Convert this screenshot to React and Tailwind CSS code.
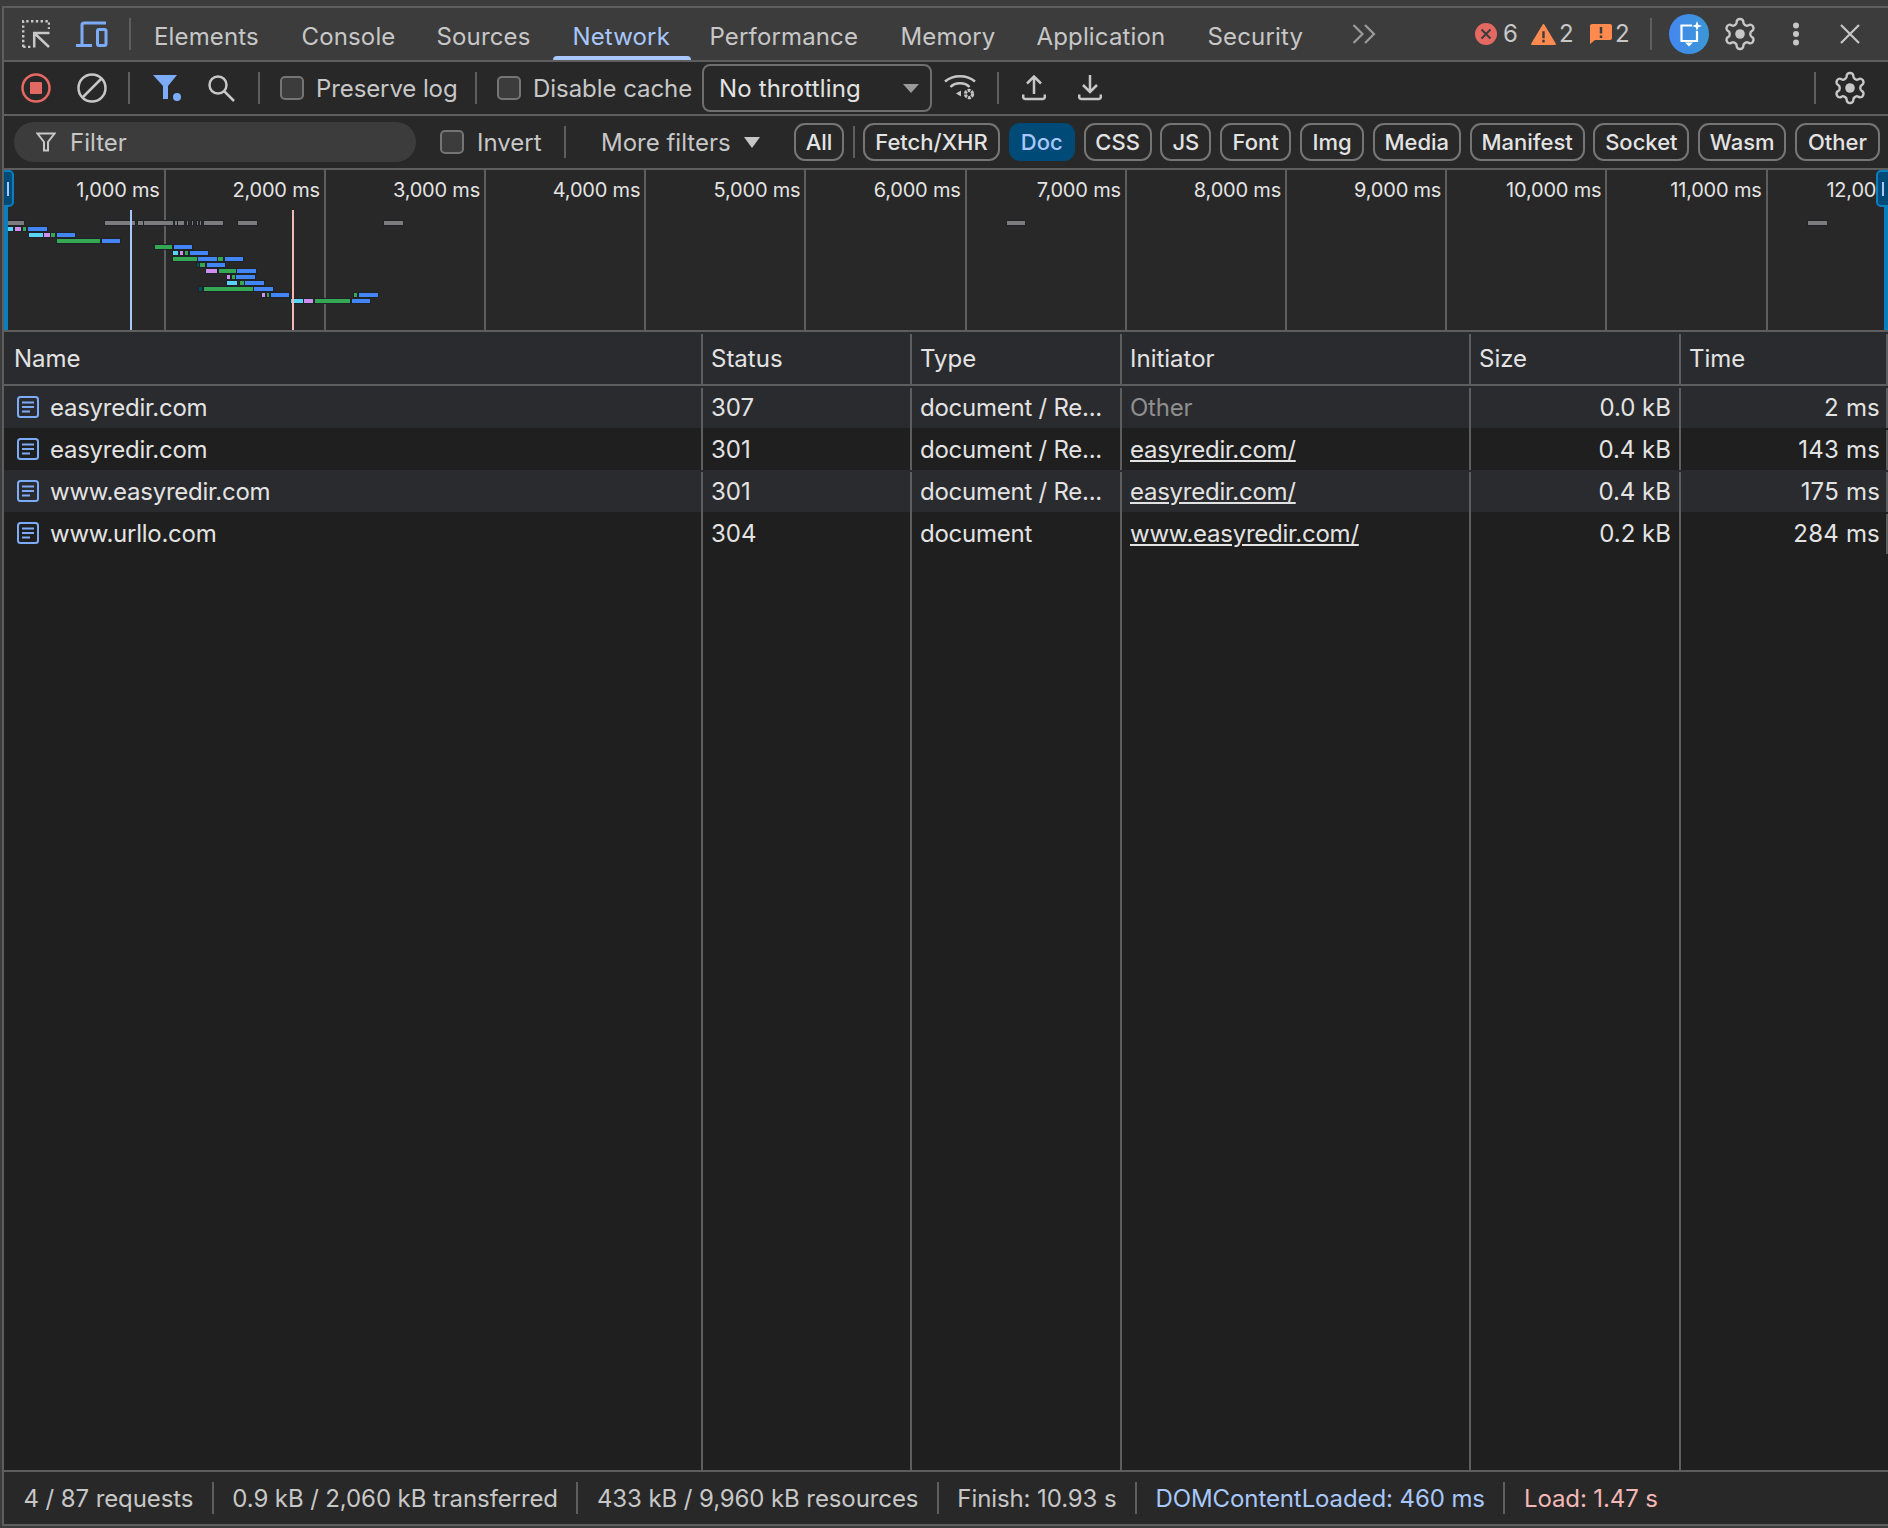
import { useState } from 'react';

const tabs = [
    { name: 'Elements', width: 'w-[147.500px]' },
    { name: 'Console', width: 'w-[135px]' },
    { name: 'Sources', width: 'w-[136px]' },
    { name: 'Network', width: 'w-[137px]', active: true },
    { name: 'Performance', width: 'w-[191px]' },
    { name: 'Memory', width: 'w-[136px]' },
    { name: 'Application', width: 'w-[171px]' },
    { name: 'Security', width: 'w-[144.500px]' },
];

const chips = [
    { name: 'Fetch/XHR', width: 'w-[137px]' },
    { name: 'Doc', width: 'w-[66px]', active: true },
    { name: 'CSS', width: 'w-[68px]' },
    { name: 'JS', width: 'w-[51px]' },
    { name: 'Font', width: 'w-[71px]' },
    { name: 'Img', width: 'w-[64px]' },
    { name: 'Media', width: 'w-[88px]' },
    { name: 'Manifest', width: 'w-[115px]' },
    { name: 'Socket', width: 'w-[96px]' },
    { name: 'Wasm', width: 'w-[88px]' },
    { name: 'Other', width: 'w-[85px]' },
];

const requests = [
    { name: 'easyredir.com', status: '307', type: 'document / Re...', initiator: 'Other', size: '0.0 kB', time: '2 ms' },
    { name: 'easyredir.com', status: '301', type: 'document / Re...', initiator: 'easyredir.com/', link: true, size: '0.4 kB', time: '143 ms' },
    { name: 'www.easyredir.com', status: '301', type: 'document / Re...', initiator: 'easyredir.com/', link: true, size: '0.4 kB', time: '175 ms' },
    { name: 'www.urllo.com', status: '304', type: 'document', initiator: 'www.easyredir.com/', link: true, size: '0.2 kB', time: '284 ms' },
];

const G = '#34a853';
const B = '#4285f4';
const C = '#5bd3f7';
const P = '#d08ff0';
const D = '#04505f';
const K = '#7c7c7c';

// overview rows: [y, [x0, x1, colour]...] read off the reference, in px
const overview = [
    [221, [[7, 24, K], [105, 135, K], [138, 143, K], [144, 173, K], [175, 177, K], [178, 184, K], [187, 188, K], [192, 193, K], [197, 198, K], [200, 201, K], [204, 223, K], [238, 257, K], [384, 403, K], [1007, 1025, K], [1808, 1827, K]]],
    [227, [[7, 13, C], [15, 21, P], [23, 26, G], [28, 47, B]]],
    [233, [[29, 43, C], [44, 50, P], [51, 55, G], [57, 75, B]]],
    [239, [[57, 100, G], [102, 120, B]]],
    [245, [[155, 172, G], [174, 192, B]]],
    [251, [[173, 178, C], [180, 183, P], [185, 188, G], [190, 208, B]]],
    [257, [[173, 197, G], [198, 217, B], [218, 223, G], [225, 243, B]]],
    [263, [[197, 199, D], [200, 205, G], [207, 225, B]]],
    [269, [[206, 217, P], [219, 236, G], [237, 256, B]]],
    [275, [[227, 230, P], [232, 235, G], [236, 255, B]]],
    [281, [[227, 237, C], [240, 244, G], [245, 264, B]]],
    [287, [[199, 202, D], [204, 253, G], [254, 273, B]]],
    [293, [[262, 265, P], [267, 269, G], [271, 289, B], [354, 357, G], [359, 378, B]]],
    [299, [[291, 303, C], [304, 313, P], [315, 350, G], [352, 370, B]]],
];

const labels = ['1,000 ms', '2,000 ms', '3,000 ms', '4,000 ms', '5,000 ms', '6,000 ms', '7,000 ms', '8,000 ms', '9,000 ms', '10,000 ms', '11,000 ms', '12,000 ms'];

function Gear({ className }) {
    return (
        <svg className={className} viewBox="0 0 24 24" fill="none" stroke="#c7c7c7" strokeWidth="1.6">
            <path d="M12.22 2h-.44a2 2 0 0 0-2 2v.18a2 2 0 0 1-1 1.73l-.43.25a2 2 0 0 1-2 0l-.15-.08a2 2 0 0 0-2.73.73l-.22.38a2 2 0 0 0 .73 2.73l.15.1a2 2 0 0 1 1 1.72v.51a2 2 0 0 1-1 1.74l-.15.09a2 2 0 0 0-.73 2.73l.22.38a2 2 0 0 0 2.73.73l.15-.08a2 2 0 0 1 2 0l.43.25a2 2 0 0 1 1 1.73V20a2 2 0 0 0 2 2h.44a2 2 0 0 0 2-2v-.18a2 2 0 0 1 1-1.73l.43-.25a2 2 0 0 1 2 0l.15.08a2 2 0 0 0 2.73-.73l.22-.39a2 2 0 0 0-.73-2.73l-.15-.08a2 2 0 0 1-1-1.74v-.5a2 2 0 0 1 1-1.74l.15-.09a2 2 0 0 0 .73-2.73l-.22-.38a2 2 0 0 0-2.73-.73l-.15.08a2 2 0 0 1-2 0l-.43-.25a2 2 0 0 1-1-1.73V4a2 2 0 0 0-2-2z" />
            <circle cx="12" cy="12" r="3.2" fill="#c7c7c7" stroke="none" />
        </svg>
    );
}

function DocIcon() {
    return (
        <svg className="w-[22px] h-[22px] shrink-0 mt-[-2px]" viewBox="0 0 22 22" fill="none">
            <rect x="1" y="1" width="20" height="20" rx="2.5" stroke="#7cacf8" strokeWidth="2" />
            <path d="M5 6.5h12M5 11h12M5 15.5h8" stroke="#7cacf8" strokeWidth="2" />
        </svg>
    );
}

function Checkbox({ className = '' }) {
    return <span className={`w-[24px] h-[24px] rounded-[5px] border-2 border-[#757575] bg-[#3c3c3c] shrink-0 ${className}`} />;
}

function Divider({ className = '' }) {
    return <span className={`w-[2px] h-[32px] bg-[#5e5e5e] shrink-0 ${className}`} />;
}

function TabBar() {
    return (
        <div className="h-[52px] flex items-center bg-[#3c3c3c] shrink-0">
            <svg className="w-[28px] h-[28px] ml-[18px] shrink-0" viewBox="0 0 28 28" fill="none" stroke="#c7c7c7">
                <path d="M1.200 27V1.200H27V9" strokeWidth="2.400" strokeDasharray="2.400 2.400" />
                <path d="M1.200 27H9" strokeWidth="2.400" strokeDasharray="2.400 2.400" />
                <path d="M27.500 13H12.200V27.500M12.200 13L27 27" strokeWidth="2.500" />
            </svg>
            <svg className="w-[32px] h-[26px] ml-[26px] shrink-0" viewBox="0 0 32 26" fill="none" stroke="#7cacf8" strokeWidth="3">
                <path d="M30 2H8a2 2 0 0 0-2 2V23" />
                <path d="M0 24.500H16" />
                <rect x="21.500" y="8.500" width="8.500" height="16" rx="1.500" />
            </svg>
            <Divider className="ml-[21px] mr-[23px]" />
            {tabs.map((tab) => (
                <div key={tab.name} className={`relative h-full flex items-center pt-[6px] text-[24px] tracking-[0.15px] ${tab.width} ${tab.active ? 'text-[#a8c7fa]' : 'text-[#c7c7c7]'}`}>
                    {tab.name}
                    {tab.active && <span className="absolute left-[-20px] w-[138px] bottom-0 h-[4px] rounded-t-[4px] bg-[#a8c7fa]" />}
                </div>
            ))}
            <svg className="w-[24px] h-[20px] shrink-0" viewBox="0 0 24 20" fill="none" stroke="#9a9a9a" strokeWidth="2.200">
                <path d="M1.500 1l9 9-9 9M13 1l9 9-9 9" />
            </svg>
            <svg className="w-[22px] h-[22px] ml-[99px] shrink-0" viewBox="0 0 22 22">
                <circle cx="11" cy="11" r="11" fill="#e46962" />
                <path d="M6.500 6.500l9 9M15.500 6.500l-9 9" stroke="#3c3c3c" strokeWidth="2" />
            </svg>
            <span className="ml-[6px] w-[22px] text-[24px] text-[#c7c7c7]">6</span>
            <svg className="w-[25px] h-[21px] ml-[6px] shrink-0" viewBox="0 0 26 22">
                <path d="M13 1L25 21H1z" fill="#ff8a50" stroke="#ff8a50" strokeWidth="2" strokeLinejoin="round" />
                <path d="M13 7.500v7.500M13 16.500v3" stroke="#3c3c3c" strokeWidth="2.500" />
            </svg>
            <span className="ml-[3px] w-[24px] text-[24px] text-[#c7c7c7]">2</span>
            <svg className="w-[22px] h-[20px] ml-[7px] shrink-0" viewBox="0 0 22 20">
                <path d="M2 0H20a2 2 0 0 1 2 2V14a2 2 0 0 1-2 2H5L0 20V2a2 2 0 0 1 2-2z" fill="#ff8a50" />
                <path d="M11 3v6.500M11 11.500v2.500" stroke="#3c3c3c" strokeWidth="2.500" />
            </svg>
            <span className="ml-[3px] w-[22px] text-[24px] text-[#c7c7c7]">2</span>
            <Divider className="ml-[13px]" />
            <div className="w-[40px] h-[40px] ml-[17px] rounded-full bg-linear-to-r from-[#4487f0] to-[#3b97d5] shrink-0">
                <svg className="w-[40px] h-[40px]" viewBox="0 0 40 40" fill="none">
                    <path d="M23 11.500H12.500V27H28V17" stroke="#fff" strokeWidth="2.200" />
                    <path d="M16 28.500h8l-4 4z" fill="#fff" />
                    <path d="M28 7l1.300 3.700 3.700 1.300-3.700 1.300-1.300 3.700-1.300-3.700-3.700-1.300 3.700-1.300z" fill="#fff" />
                </svg>
            </div>
            <Gear className="w-[36px] h-[36px] ml-[13px] shrink-0" />
            <svg className="w-[8px] h-[24px] ml-[34px] shrink-0" viewBox="0 0 8 24" fill="#c7c7c7">
                <circle cx="4" cy="3.500" r="3" />
                <circle cx="4" cy="12" r="3" />
                <circle cx="4" cy="20.500" r="3" />
            </svg>
            <svg className="w-[20px] h-[20px] ml-[40px] shrink-0" viewBox="0 0 20 20" stroke="#c7c7c7" strokeWidth="2.200">
                <path d="M1 1l18 18M19 1L1 19" />
            </svg>
        </div>
    );
}

function Toolbar() {
    return (
        <div className="h-[54px] flex items-center bg-[#282828] border-t-2 border-[#5e5e5e] shrink-0 text-[24px]">
            <svg className="w-[30px] h-[30px] ml-[17px] shrink-0" viewBox="0 0 30 30">
                <circle cx="15" cy="15" r="13.500" fill="none" stroke="#e46962" strokeWidth="2.500" />
                <rect x="9" y="9" width="12" height="12" rx="1" fill="#e46962" />
            </svg>
            <svg className="w-[30px] h-[30px] ml-[26px] shrink-0" viewBox="0 0 30 30" fill="none" stroke="#c7c7c7" strokeWidth="2.500">
                <circle cx="15" cy="15" r="13.500" />
                <path d="M24.500 5.500l-19 19" />
            </svg>
            <Divider className="ml-[21px]" />
            <svg className="w-[28px] h-[26px] ml-[23px] shrink-0" viewBox="0 0 28 26" fill="#7cacf8">
                <path d="M0 0H24L15 11V24H10V11z" />
                <circle cx="24" cy="22" r="4" />
            </svg>
            <svg className="w-[28px] h-[28px] ml-[26px] shrink-0" viewBox="0 0 28 28" fill="none" stroke="#c7c7c7" strokeWidth="2.500">
                <circle cx="11" cy="11" r="8.500" />
                <path d="M17 17l10 10" />
            </svg>
            <Divider className="ml-[23px]" />
            <Checkbox className="ml-[20px]" />
            <span className="ml-[12px] w-[146px] pt-[2px] text-[#c7c7c7] whitespace-nowrap tracking-[-0.1px]">Preserve log</span>
            <Divider className="ml-[13px]" />
            <Checkbox className="ml-[20px]" />
            <span className="ml-[12px] w-[156px] pt-[2px] text-[#c7c7c7] whitespace-nowrap tracking-[-0.05px]">Disable cache</span>
            <div className="w-[230px] h-[48px] ml-[13px] rounded-[8px] border-2 border-[#6e6e6e] flex items-center pl-[15px] text-[#e3e3e3] shrink-0">
                <span className="flex-1 pt-[2px] whitespace-nowrap tracking-[0.15px]">No throttling</span>
                <span className="mr-[11px] w-0 h-0 border-x-[8px] border-x-transparent border-t-[9px] border-t-[#9a9a9a]" />
            </div>
            <svg className="w-[32px] h-[28px] ml-[12px] shrink-0" viewBox="0 0 32 28" fill="none" stroke="#c7c7c7" strokeWidth="2.500">
                <path d="M1 7.500C9 .5 23 .5 31 7.500M6.500 13C11 8 21 8 25.500 13" />
                <path d="M12 19.500L17 16.500V22.500z" fill="#c7c7c7" stroke="none" />
                <circle cx="25" cy="20" r="3.600" strokeWidth="3.200" strokeDasharray="2.800 1" />
            </svg>
            <Divider className="ml-[21px]" />
            <svg className="w-[24px] h-[26px] ml-[23px] shrink-0" viewBox="0 0 24 26" fill="none" stroke="#c7c7c7" strokeWidth="2.500">
                <path d="M12 19V1.500M5 8.500L12 1.500l7 7M1.200 19.500v2.500a2 2 0 0 0 2 2h17.600a2 2 0 0 0 2-2v-2.500" />
            </svg>
            <svg className="w-[24px] h-[26px] ml-[32px] shrink-0" viewBox="0 0 24 26" fill="none" stroke="#c7c7c7" strokeWidth="2.500">
                <path d="M12 0V17M5 10L12 17l7-7M1.200 19.500v2.500a2 2 0 0 0 2 2h17.600a2 2 0 0 0 2-2v-2.500" />
            </svg>
            <Divider className="ml-[712px]" />
            <Gear className="w-[36px] h-[36px] ml-[16px] shrink-0" />
        </div>
    );
}

function FilterBar() {
    return (
        <div className="h-[54px] flex items-center bg-[#282828] border-t-2 border-[#5e5e5e] shrink-0 text-[24px]">
            <div className="w-[402px] h-[40px] ml-[10px] rounded-full bg-[#3c3c3c] flex items-center pl-[22px] text-[#c7c7c7] shrink-0">
                <svg className="w-[20px] h-[20px] shrink-0" viewBox="0 0 20 20" fill="none" stroke="#c7c7c7" strokeWidth="2">
                    <path d="M1.500 1.500h17L12 10v8.500H8V10z" />
                </svg>
                <span className="ml-[14px] pt-[2px]">Filter</span>
            </div>
            <Checkbox className="ml-[24px]" />
            <span className="ml-[13px] w-[63px] pt-[2px] text-[#c7c7c7]">Invert</span>
            <Divider className="ml-[24px]" />
            <span className="ml-[35px] w-[143px] pt-[2px] text-[#c7c7c7] whitespace-nowrap">More filters</span>
            <span className="w-0 h-0 border-x-[8px] border-x-transparent border-t-[11px] border-t-[#c7c7c7] shrink-0" />
            <div className="ml-[34px] flex items-center font-medium text-[22px] text-[#e3e3e3]">
                <span className="w-[50px] h-[38px] rounded-[11px] border-2 border-[#757575] flex items-center justify-center shrink-0">All</span>
                <Divider className="ml-[9px] mr-[8px]" />
                <div className="flex items-center gap-[8.800px]">
                    {chips.map((chip) => (
                        <span key={chip.name} className={`${chip.width} h-[38px] rounded-[11px] border-2 flex items-center justify-center shrink-0 whitespace-nowrap ${chip.active ? 'border-[#004a77] bg-[#004a77] text-[#a8c7fa]' : 'border-[#757575]'}`}>
                            {chip.name}
                        </span>
                    ))}
                </div>
            </div>
        </div>
    );
}

function Overview() {
    return (
        <div className="relative h-[164px] bg-[#282828] border-t-2 border-b-2 border-[#5e5e5e] overflow-hidden shrink-0">
            <div className="flex h-full ml-[1.500px]">
                {labels.map((label) => (
                    <div key={label} className="w-[160.200px] shrink-0 h-full border-r-2 border-[#5e5e5e] text-right pr-[4px] pt-[8px] text-[20px] leading-[24px] tracking-[-0.2px] text-[#e3e3e3] whitespace-nowrap">
                        {label}
                    </div>
                ))}
            </div>
            {overview.map(([y, bars]) => bars.map(([x0, x1, colour]) => (
                <span key={`${y}-${x0}`} className="absolute h-[6px] border border-[#1f2328]" style={{ left: x0 - 5, top: y - 171, width: x1 - x0 + 2, backgroundColor: colour }} />
            )))}
            <span className="absolute left-[126px] top-[40px] bottom-0 w-[2px] bg-[#a8c7fa]" />
            <span className="absolute left-[288px] top-[40px] bottom-0 w-[2px] bg-[#f2b8b5]" />
            <span className="absolute left-0 top-0 bottom-0 w-[4px] bg-[#0a7fbf]" />
            <span className="absolute left-[-2px] top-0 w-[12px] h-[37px] rounded-r-[5px] bg-[#004a77] border-2 border-[#0a7fbf] flex items-center justify-center">
                <span className="w-[2px] h-[14px] bg-[#a8c7fa]" />
            </span>
            <span className="absolute right-0 top-0 bottom-0 w-[4px] bg-[#0a7fbf]" />
            <span className="absolute right-[-2px] top-0 w-[14px] h-[37px] rounded-l-[5px] bg-[#004a77] border-2 border-[#0a7fbf] flex items-center justify-center">
                <span className="w-[2px] h-[14px] bg-[#a8c7fa]" />
            </span>
        </div>
    );
}

function RequestTable() {
    const [rows] = useState(requests);
    const cols = 'grid grid-cols-[699px_209px_210px_349px_210px_1fr]';
    const cell = 'border-r-2 border-[#5e5e5e] px-[8px] flex items-center whitespace-nowrap overflow-hidden';
    const squeezed = 'tracking-[-0.25px]';

    return (
        <div className="flex-1 flex flex-col bg-[#1f1f1f] min-h-0 text-[24px] text-[#e3e3e3]">
            <div className={`${cols} h-[54px] pt-[2px] bg-[#2a2b2e] border-b-2 border-[#5e5e5e] shrink-0`}>
                {['Name', 'Status', 'Type', 'Initiator', 'Size', 'Time'].map((title) => (
                    <div key={title} className={`${cell} ${title === 'Name' ? 'pl-[10px]' : ''} ${title === 'Time' ? 'border-r-0' : ''}`}>{title}</div>
                ))}
            </div>
            <div className={`${cols} flex-1`}>
                <div className="border-r-2 border-[#5e5e5e] col-start-1 row-start-1" />
                <div className="border-r-2 border-[#5e5e5e] col-start-2 row-start-1" />
                <div className="border-r-2 border-[#5e5e5e] col-start-3 row-start-1" />
                <div className="border-r-2 border-[#5e5e5e] col-start-4 row-start-1" />
                <div className="border-r-2 border-[#5e5e5e] col-start-5 row-start-1" />
                <div className="col-span-full col-start-1 row-start-1 flex flex-col">
                    {rows.map((row, index) => (
                        <div key={`${row.name}-${index}`} className={`${cols} h-[42px] shrink-0 pt-[2px] ${index % 2 === 0 ? 'bg-[#2a2b2e]' : ''}`}>
                            <div className={`${cell} gap-[11px] pl-[13px] ${squeezed}`}>
                                <DocIcon />
                                {row.name}
                            </div>
                            <div className={cell}>{row.status}</div>
                            <div className={`${cell} ${squeezed}`}>{row.type}</div>
                            <div className={`${cell} ${squeezed}`}>
                                <span className={row.link ? 'underline' : 'text-[#8f8f8f]'}>{row.initiator}</span>
                            </div>
                            <div className={`${cell} justify-end`}>{row.size}</div>
                            <div className={`${cell} justify-end border-r-0 pr-[6px] tracking-[0.2px]`}>{row.time}</div>
                        </div>
                    ))}
                </div>
            </div>
        </div>
    );
}

function StatusBar() {
    const items = [
        { text: '4 / 87 requests', color: 'text-[#c7c7c7]' },
        { text: '0.9 kB / 2,060 kB transferred', color: 'text-[#c7c7c7]' },
        { text: '433 kB / 9,960 kB resources', color: 'text-[#c7c7c7]' },
        { text: 'Finish: 10.93 s', color: 'text-[#c7c7c7]' },
        { text: 'DOMContentLoaded: 460 ms', color: 'text-[#a8c7fa]' },
        { text: 'Load: 1.47 s', color: 'text-[#f2b8b5]' },
    ];

    return (
        <div className="h-[56px] flex items-center pl-[1px] bg-[#282828] border-y-2 border-[#5e5e5e] shrink-0 text-[24px] tracking-[-0.1px]">
            {items.map((item, index) => (
                <div key={item.text} className={`h-[32px] flex items-center pt-[2px] px-[18.500px] whitespace-nowrap ${item.color} ${index < items.length - 1 ? 'border-r-2 border-[#5e5e5e]' : ''}`}>
                    {item.text}
                </div>
            ))}
        </div>
    );
}

export default function App() {
    return (
        <div className="w-[1888px] h-[1528px] pl-[2px] pt-[6px] pb-[2px] bg-[#3c3c3c] overflow-hidden [font-family:Inter,sans-serif]">
            <div className="h-full flex flex-col border-l-2 border-t-2 border-[#5e5e5e]">
                <TabBar />
                <Toolbar />
                <FilterBar />
                <Overview />
                <RequestTable />
                <StatusBar />
            </div>
        </div>
    );
}
